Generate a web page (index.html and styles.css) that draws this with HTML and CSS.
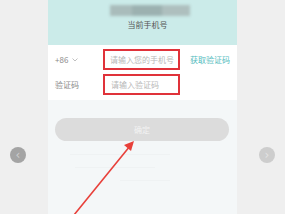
FILE: index.html
```html
<!DOCTYPE html>
<html>
<head>
<meta charset="utf-8">
<link rel="stylesheet" href="styles.css">
</head>
<body>
<div class="stage">
  <div class="side side-left"><div class="nav nav-left">&#8249;</div></div>
  <div class="panel">
    <div class="top">
      <div class="blur"><span class="b1"></span><span class="b2"></span><span class="b3"></span></div>
      <div class="cur">当前手机号</div>
    </div>
    <div class="form">
      <div class="row">
        <div class="label">+86<svg class="chev" width="6" height="4" viewBox="0 0 6 4"><polyline points="0.5,0.5 3,3 5.5,0.5" fill="none" stroke="#b0b0b0" stroke-width="0.8"/></svg></div>
        <div class="box">请输入您的手机号</div>
        <div class="get">获取验证码</div>
      </div>
      <div class="row row2">
        <div class="label">验证码</div>
        <div class="box box2">请输入验证码</div>
      </div>
    </div>
    <div class="lower">
      <div class="btn">确定</div>
      <div class="lines">
        <span class="ln l1"></span>
        <span class="ln l2"></span>
        <span class="ln l3"></span>
      </div>
    </div>
  </div>
  <div class="side side-right"><div class="nav nav-right">&#8250;</div></div>
  <svg class="arrow" width="285" height="214" viewBox="0 0 285 214">
    <line x1="74" y1="215" x2="130" y2="146" stroke="#e8403a" stroke-width="1.6"/>
    <polygon points="134,141 124,145 131,151" fill="#e8403a"/>
  </svg>
</div>
</body>
</html>
```
FILE: styles.css
```css
* { box-sizing: border-box; }
html, body { margin: 0; padding: 0; }
body {
  width: 285px;
  height: 214px;
  overflow: hidden;
  background: #efefef;
  font-family: "Noto Sans CJK SC", "Noto Sans", sans-serif;
}
.stage {
  position: relative;
  display: flex;
  width: 285px;
  height: 214px;
}
.side {
  width: 48px;
  display: flex;
  padding-top: 147px;
  justify-content: center;
}
.nav {
  width: 16px;
  height: 16px;
  border-radius: 50%;
  display: flex;
  align-items: center;
  justify-content: center;
  font-size: 12px;
  line-height: 1;
  font-family: "DejaVu Sans", sans-serif;
}
.side-left { padding-right: 12px; }
.side-right { padding-left: 12px; }
.nav-left { background: #a4a4a4; color: #cdcdcd; }
.nav-right { background: #cdcdcd; color: #e2e2e2; }
.panel {
  width: 189px;
  display: flex;
  flex-direction: column;
  background: #f4f7f8;
}
.top {
  height: 45px;
  background: #cbebe9;
  display: flex;
  flex-direction: column;
  align-items: center;
  padding-top: 5px;
}
.blur {
  width: 80px;
  height: 11px;
  display: flex;
  margin-left: 15px;
  filter: blur(1.5px);
}
.blur span { display: block; height: 11px; }
.b1 { width: 22px; background: #a9bcbb; }
.b2 { width: 30px; background: #9cb1b0; }
.b3 { width: 28px; background: #aebfbe; }
.cur {
  margin-top: 3px;
  margin-left: 10px;
  font-size: 8px;
  line-height: 12px;
  color: #555;
}
.form {
  background: #fff;
  height: 55px;
  padding-top: 4px;
}
.row {
  display: flex;
  align-items: center;
  height: 21px;
  padding-left: 7px;
}
.row2 { margin-top: 4px; }
.label {
  width: 48px;
  font-size: 8px;
  color: #8a8a8a;
  display: flex;
  align-items: center;
}
.chev { margin-left: 4px; margin-top: 1px; }
.box {
  width: 77px;
  height: 21px;
  border: 2px solid #e0323a;
  font-size: 8px;
  color: #b8b8b8;
  display: flex;
  align-items: center;
  padding-left: 5px;
  white-space: nowrap;
  overflow: hidden;
}
.box2 { padding-left: 6px; }
.get {
  margin-left: 10px;
  font-size: 8px;
  color: #54bcbe;
  white-space: nowrap;
}
.lower {
  flex: 1;
  padding: 18px 8px 0 7px;
}
.btn {
  height: 23px;
  border-radius: 12px;
  background: #dcdcdc;
  color: #f3f3f3;
  font-size: 8px;
  display: flex;
  align-items: center;
  justify-content: center;
}
.lines {
  display: flex;
  flex-direction: column;
  padding-top: 13px;
  gap: 12px;
}
.ln { display: block; height: 1px; background: #eff2f3; }
.l1 { width: 100px; margin-left: 15px; }
.l2 { width: 80px; margin-left: 20px; }
.l3 { width: 50px; margin-left: 65px; }
.arrow {
  position: absolute;
  left: 0;
  top: 0;
}
```
